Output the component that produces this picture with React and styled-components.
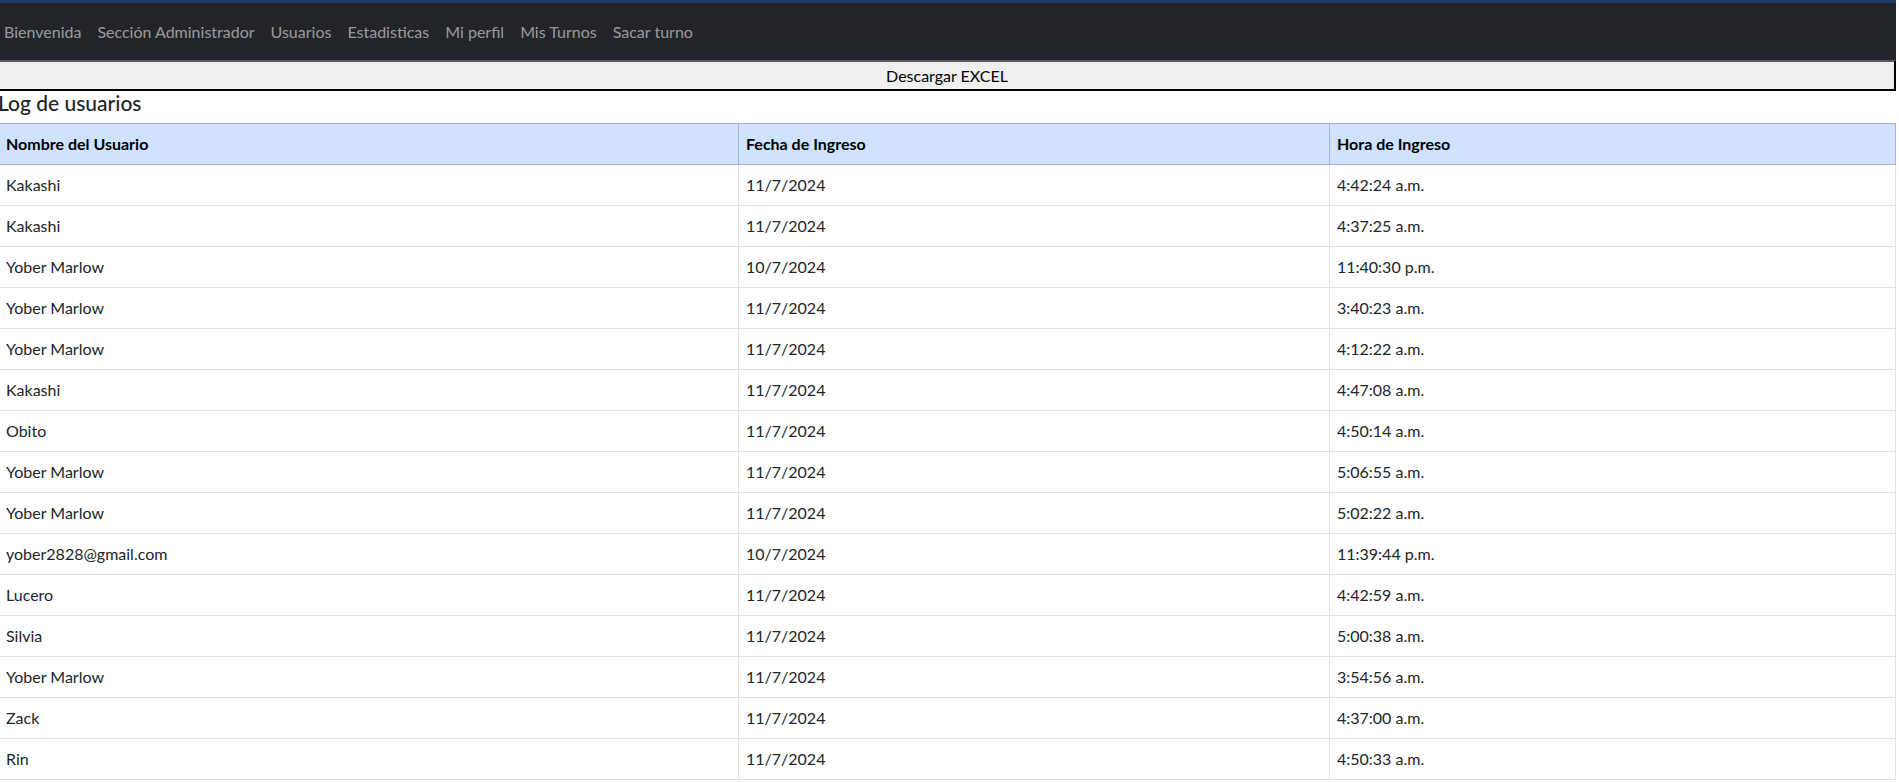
import React from "react";
import styled, { createGlobalStyle } from "styled-components";

const GlobalStyle = createGlobalStyle`
  html, body {
    margin: 0;
    padding: 0;
    overflow: hidden;
    background: #ffffff;
  }
  body {
    font-family: Lato, "Liberation Sans", sans-serif;
    font-size: 16px;
    line-height: 1.5;
    color: #212529;
  }
  * { box-sizing: border-box; }
`;

const Page = styled.div`
  margin-left: -2px;
  width: 1898px;
`;

const Navbar = styled.nav`
  height: 60px;
  background: #212529;
  border-top: 3px solid #1e3a5f;
  display: flex;
  align-items: center;
`;

const NavList = styled.ul`
  list-style: none;
  margin: 0 0 0 -2px;
  padding: 0;
  display: flex;
  align-items: center;
`;

const NavLink = styled.a`
  display: block;
  padding: 8px 8px;
  color: rgba(255, 255, 255, 0.55);
  text-decoration: none;
  font-size: 16px;
  line-height: 24px;
`;

const ExcelButton = styled.button`
  display: block;
  width: 100%;
  height: 31px;
  margin: 0;
  padding: 1px 6px;
  background: #f0f0f0;
  border-style: solid;
  border-width: 2px;
  border-color: #5a5a5a #000000 #000000 #5a5a5a;
  font-family: Lato, "Liberation Sans", sans-serif;
  font-size: 16px;
  line-height: 24px;
  color: #000000;
  text-align: center;
`;

const Heading = styled.h5`
  margin: 0 0 8px;
  font-size: 21px;
  font-weight: 500;
  line-height: 24px;
  color: #212529;
`;

const Table = styled.table`
  width: 100%;
  border-collapse: collapse;
  table-layout: fixed;
`;

const Col = styled.col`
  width: ${(p) => p.$w};
`;

const HeadCell = styled.th`
  background: #cfe2ff;
  border: 1px solid #a6b5cc;
  padding: 8px 8px 8px 7px;
  line-height: 24px;
  text-align: left;
  font-weight: 700;
  color: #000000;
`;

const Cell = styled.td`
  border: 1px solid #dee2e6;
  padding: 8px 8px 8px 7px;
  line-height: 24px;
  color: #212529;
`;

const links = [
  "Bienvenida",
  "Sección Administrador",
  "Usuarios",
  "Estadisticas",
  "Mi perfil",
  "Mis Turnos",
  "Sacar turno",
];

const rows = [
  ["Kakashi", "11/7/2024", "4:42:24 a.m."],
  ["Kakashi", "11/7/2024", "4:37:25 a.m."],
  ["Yober Marlow", "10/7/2024", "11:40:30 p.m."],
  ["Yober Marlow", "11/7/2024", "3:40:23 a.m."],
  ["Yober Marlow", "11/7/2024", "4:12:22 a.m."],
  ["Kakashi", "11/7/2024", "4:47:08 a.m."],
  ["Obito", "11/7/2024", "4:50:14 a.m."],
  ["Yober Marlow", "11/7/2024", "5:06:55 a.m."],
  ["Yober Marlow", "11/7/2024", "5:02:22 a.m."],
  ["yober2828@gmail.com", "10/7/2024", "11:39:44 p.m."],
  ["Lucero", "11/7/2024", "4:42:59 a.m."],
  ["Silvia", "11/7/2024", "5:00:38 a.m."],
  ["Yober Marlow", "11/7/2024", "3:54:56 a.m."],
  ["Zack", "11/7/2024", "4:37:00 a.m."],
  ["Rin", "11/7/2024", "4:50:33 a.m."],
];

export default function App() {
  return (
    <>
      <GlobalStyle />
      <Page>
        <Navbar>
          <NavList>
            {links.map((l) => (
              <li key={l}>
                <NavLink href="#">{l}</NavLink>
              </li>
            ))}
          </NavList>
        </Navbar>
        <ExcelButton>Descargar EXCEL</ExcelButton>
        <Heading>Log de usuarios</Heading>
        <Table>
          <colgroup>
            <Col $w="740px" />
            <Col $w="591px" />
            <Col $w="auto" />
          </colgroup>
          <thead>
            <tr>
              <HeadCell>Nombre del Usuario</HeadCell>
              <HeadCell>Fecha de Ingreso</HeadCell>
              <HeadCell>Hora de Ingreso</HeadCell>
            </tr>
          </thead>
          <tbody>
            {rows.map((r, i) => (
              <tr key={i}>
                <Cell>{r[0]}</Cell>
                <Cell>{r[1]}</Cell>
                <Cell>{r[2]}</Cell>
              </tr>
            ))}
          </tbody>
        </Table>
      </Page>
    </>
  );
}
